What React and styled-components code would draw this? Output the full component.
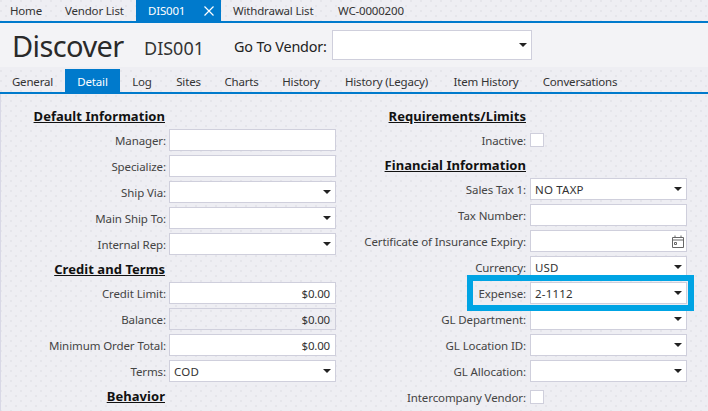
import styled, { createGlobalStyle } from 'styled-components';

const GlobalStyle = createGlobalStyle`
  html, body {
    margin: 0;
    padding: 0;
    width: 708px;
    height: 411px;
    overflow: hidden;
    font-family: "Noto Sans", "Open Sans", sans-serif;
    letter-spacing: -0.18px;
    color: #2b2b2b;
  }
`

const Page = styled.div`
  position: relative;
  width: 708px;
  height: 411px;
  overflow: hidden;
  background-color: #eeeef3;
  background-image:
    radial-gradient(circle at 1px 1px, #e0e0e6 0.6px, transparent 0.9px),
    radial-gradient(circle at 6px 6px, #e0e0e6 0.6px, transparent 0.9px);
  background-size: 10px 10px;
  display: flex;
  flex-direction: column;
`

const AppTabs = styled.div`
  display: flex;
  height: 21px;
  border-bottom: 2px solid #007acc;
  flex: none;
`

const AppTab = styled.div`
  display: flex;
  align-items: center;
  justify-content: space-between;
  width: ${p => p.$width}px;
  padding-left: ${p => p.$pad}px;
  box-sizing: border-box;
  font-size: 11.5px;
  white-space: nowrap;
  background: ${p => (p.$active ? '#007acc' : 'transparent')};
  color: ${p => (p.$active ? '#fff' : '#333')};
`

const CloseIcon = styled.svg`
  width: 10px;
  height: 10px;
  margin-right: 7px;
  flex: none;
`

const Header = styled.div`
  display: flex;
  align-items: center;
  height: 44px;
  padding-left: 12px;
  background: #f3f3f6;
  flex: none;
`

const Title = styled.div`
  font-size: 29px;
  letter-spacing: -0.6px;
  color: #2a2a2a;
  width: 132px;
  margin-top: 1px;
`

const Code = styled.div`
  font-size: 18px;
  letter-spacing: 0;
  color: #333;
  width: 90px;
  margin-top: 5px;
`

const GoLabel = styled.div`
  font-size: 14.4px;
  color: #222;
  width: 98px;
  white-space: nowrap;
  margin-top: 3px;
`

const Tabs = styled.div`
  display: flex;
  height: 25px;
  border-bottom: 2px solid #007acc;
  flex: none;
`

const Tab = styled.div`
  display: flex;
  align-items: center;
  justify-content: center;
  width: ${p => p.$width}px;
  font-size: 11.5px;
  white-space: nowrap;
  margin-top: ${p => (p.$active ? '2px' : '0')};
  padding-top: ${p => (p.$active ? '1px' : '3px')};
  background: ${p => (p.$active ? '#007acc' : 'transparent')};
  color: ${p => (p.$active ? '#fff' : '#333')};
`

const Body = styled.div`
  display: grid;
  grid-template-columns: 336px 352px;
  padding-top: 12px;
  border-left: 1px solid #d8d8e6;
`

const Column = styled.div`
  display: flex;
  flex-direction: column;
  margin-left: ${p => p.$shift || 0}px;
`

const Heading = styled.div`
  width: ${p => p.$right}px;
  text-align: right;
  font-size: 13px;
  font-weight: 700;
  letter-spacing: 0.05px;
  text-decoration: underline;
  color: #111;
  height: 23px;
  line-height: 20px;
  white-space: nowrap;
`

const Row = styled.div`
  display: flex;
  align-items: center;
  height: 22px;
  margin-bottom: 4px;
`

const Label = styled.div`
  width: ${p => p.$width}px;
  padding-right: ${p => p.$gap}px;
  box-sizing: border-box;
  text-align: right;
  font-size: 11.5px;
  letter-spacing: -0.1px;
  color: #444;
  white-space: nowrap;
`

const Field = styled.div`
  display: flex;
  align-items: center;
  justify-content: ${p => (p.$end ? 'flex-end' : 'space-between')};
  box-sizing: border-box;
  width: ${p => p.$width}px;
  height: 22px;
  padding: 0 ${p => (p.$end ? 5 : 4)}px 0 4px;
  border: 1px solid #cfcfdc;
  background: ${p => (p.$disabled ? 'transparent' : '#fff')};
  font-size: 11.5px;
  letter-spacing: ${p => (p.$end ? '-0.18px' : '0.2px')};
  color: #333;
`

const GoField = styled(Field)`
  height: 30px;
`

const Arrow = styled.svg`
  width: 8px;
  height: 4px;
  margin-left: auto;
  flex: none;
`

const CalendarIcon = styled.svg`
  width: 12px;
  height: 13px;
  margin: 0 -2px 0 auto;
  flex: none;
`

const Check = styled.div`
  box-sizing: border-box;
  width: 14px;
  height: 14px;
  border: 1px solid #cfcfdc;
  background: #fff;
`

const Highlight = styled.div`
  position: absolute;
  left: 467px;
  top: 275px;
  width: 227px;
  height: 36px;
  box-sizing: border-box;
  border: 6px solid #00a4e4;
  pointer-events: none;
`

const Caret = () => (
  <Arrow viewBox="0 0 8 4"><path d="M0 0h8L4 4z" fill="#222" /></Arrow>
)

const leftTop = [
  ['Manager:', 'text'],
  ['Specialize:', 'text'],
  ['Ship Via:', 'select'],
  ['Main Ship To:', 'select'],
  ['Internal Rep:', 'select'],
]

const right = [
  ['Sales Tax 1:', 'select', 'NO TAXP'],
  ['Tax Number:', 'text'],
  ['Certificate of Insurance Expiry:', 'date'],
  ['Currency:', 'select', 'USD'],
  ['Expense:', 'select', '2-1112'],
  ['GL Department:', 'select'],
  ['GL Location ID:', 'select'],
  ['GL Allocation:', 'select'],
]

function FieldRow({ label, kind, value, labelWidth, gap, fieldWidth, disabled }) {
  return (
    <Row>
      <Label $width={labelWidth} $gap={gap}>{label}</Label>
      <Field $width={fieldWidth} $end={kind === 'money'} $disabled={disabled}>
        {value}
        {kind === 'select' && <Caret />}
        {kind === 'date' && (
          <CalendarIcon viewBox="0 0 12 13" fill="none" stroke="#666">
            <path d="M.5 2.5h11v10H.5zM.5 5h11M3 .5v2M9 .5v2M2.5 7.5h2v2h-2z" />
          </CalendarIcon>
        )}
      </Field>
    </Row>
  )
}

const leftProps = { labelWidth: 168, gap: 3, fieldWidth: 167 }
const rightProps = { labelWidth: 194, gap: 4, fieldWidth: 157 }

export default function App() {
  return (
    <Page>
      <GlobalStyle />
      <AppTabs>
        <AppTab $width={53} $pad={10}>Home</AppTab>
        <AppTab $width={83} $pad={12}>Vendor List</AppTab>
        <AppTab $width={85} $pad={12} $active>
          DIS001
          <CloseIcon viewBox="0 0 10 10"><path d="M.5.5l9 9M9.5.5l-9 9" stroke="#fff" strokeWidth="1.2" /></CloseIcon>
        </AppTab>
        <AppTab $width={105} $pad={12}>Withdrawal List</AppTab>
        <AppTab $width={92} $pad={12}>WC-0000200</AppTab>
      </AppTabs>
      <Header>
        <Title>Discover</Title>
        <Code>DIS001</Code>
        <GoLabel>Go To Vendor:</GoLabel>
        <GoField $width={200}><Caret /></GoField>
      </Header>
      <Tabs>
        <Tab $width={65}>General</Tab>
        <Tab $width={55} $active>Detail</Tab>
        <Tab $width={44}>Log</Tab>
        <Tab $width={49}>Sites</Tab>
        <Tab $width={57}>Charts</Tab>
        <Tab $width={62}>History</Tab>
        <Tab $width={109}>History (Legacy)</Tab>
        <Tab $width={90}>Item History</Tab>
        <Tab $width={98}>Conversations</Tab>
      </Tabs>
      <Body>
        <Column>
          <Heading $right={164}>Default Information</Heading>
          {leftTop.map(([label, kind]) => (
            <FieldRow key={label} label={label} kind={kind} {...leftProps} />
          ))}
          <Heading $right={164}>Credit and Terms</Heading>
          <FieldRow label="Credit Limit:" kind="money" value="$0.00" {...leftProps} />
          <FieldRow label="Balance:" kind="money" value="$0.00" disabled {...leftProps} />
          <FieldRow label="Minimum Order Total:" kind="money" value="$0.00" {...leftProps} />
          <FieldRow label="Terms:" kind="select" value="COD" {...leftProps} />
          <Heading $right={164}>Behavior</Heading>
        </Column>
        <Column $shift={-1}>
          <Heading $right={190}>Requirements/Limits</Heading>
          <Row>
            <Label $width={194} $gap={4}>Inactive:</Label>
            <Check />
          </Row>
          <Heading $right={190}>Financial Information</Heading>
          {right.map(([label, kind, value]) => (
            <FieldRow key={label} label={label} kind={kind} value={value} {...rightProps} />
          ))}
          <Row>
            <Label $width={194} $gap={4}>Intercompany Vendor:</Label>
            <Check />
          </Row>
        </Column>
      </Body>
      <Highlight />
    </Page>
  )
}
